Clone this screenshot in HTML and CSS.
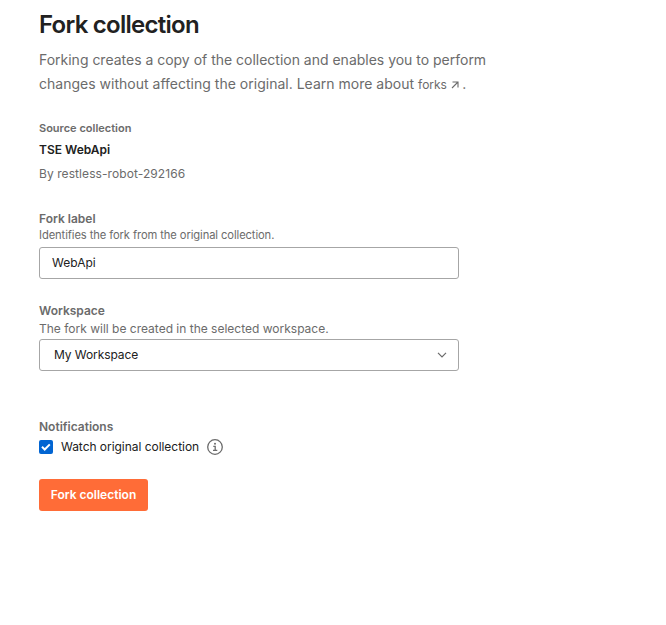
FILE: index.html
```html
<!DOCTYPE html>
<html lang="en">
<head>
<meta charset="utf-8">
<title>Fork collection</title>
<link rel="stylesheet" href="styles.css">
</head>
<body>
<main class="page">
  <h1 class="title">Fork collection</h1>
  <p class="intro">Forking creates a copy of the collection and enables you to perform<br><span class="second-line">changes without affecting the original. Learn more about</span> <a class="link">forks <svg class="arrow" viewBox="0 0 8 8" width="8" height="8"><path d="M1 7 7 1M1.500 1H7V6.500" fill="none" stroke="currentColor" stroke-width="1.100"/></svg></a> .</p>
  <section class="source">
    <div class="source-label">Source collection</div>
    <div class="source-name">TSE WebApi</div>
    <div class="source-by">By restless-robot-292166</div>
  </section>
  <section class="field label-field">
    <label class="label">Fork label</label>
    <div class="hint small">Identifies the fork from the original collection.</div>
    <div class="control">WebApi</div>
  </section>
  <section class="field">
    <label class="label">Workspace</label>
    <div class="hint">The fork will be created in the selected workspace.</div>
    <div class="control select"><span class="value">My Workspace</span><svg width="10" height="6" viewBox="0 0 10 6"><path d="M1 .8 5 4.800 9 .8" fill="none" stroke="#6b6b6b" stroke-width="1.200"/></svg></div>
  </section>
  <section class="notifications">
    <div class="label">Notifications</div>
    <div class="watch">
      <span class="checkbox"><svg width="14" height="14" viewBox="0 0 14 14"><path d="M3 6.800 5.700 9.500 10.800 4.400" fill="none" stroke="#fff" stroke-width="2"/></svg></span>
      <span class="watch-text">Watch original collection</span>
      <svg class="info" width="16" height="16" viewBox="0 0 16 16"><circle cx="8" cy="8" r="7.300" fill="none" stroke="#6b6b6b" stroke-width="1.300"/><path d="M6.300 7.300H8.200V11.400M6 11.400H10.300" fill="none" stroke="#6b6b6b" stroke-width="1.300"/><circle cx="8" cy="4.800" r="1" fill="#6b6b6b"/></svg>
    </div>
  </section>
  <button class="button">Fork collection</button>
</main>
</body>
</html>
```
FILE: styles.css
```css
* { box-sizing: border-box; }
body { margin: 0; background: #fff; color: #212121; font: 13px/20px Inter, sans-serif; }
.page { width: 459px; padding: 9px 0 0 39px; white-space: nowrap; }
.title { margin: 0; font-size: 24px; line-height: 32px; font-weight: 600; letter-spacing: -0.74px; }
.intro { margin: 7px 0 0; font-size: 14px; line-height: 24px; color: #6b6b6b; letter-spacing: -0.01px; }
.second-line { letter-spacing: 0.01px; }
.link { font-size: 12px; }
.arrow { margin: 0 -1px 0 1px; vertical-align: 0; }
.source { margin-top: 21px; color: #6b6b6b; }
.source-label { font-size: 11px; font-weight: 600; line-height: 20px; }
.source-name { font-size: 12px; font-weight: 600; line-height: 20px; margin-top: 2px; color: #212121; }
.source-by { font-size: 12px; line-height: 20px; margin-top: 4px; letter-spacing: 0.08px; }
.field { margin-top: 22px; }
.label-field { margin-top: 25px; }
.label { display: block; font-size: 12px; font-weight: 600; line-height: 20px; color: #6b6b6b; }
.hint { font-size: 12px; line-height: 16px; color: #6b6b6b; margin-bottom: 2px; }
.small { font-size: 11.2px; line-height: 12px; margin-bottom: 6px; letter-spacing: -0.1px; }
.control { width: 420px; height: 32px; border: 1px solid #a6a6a6; border-radius: 3px; padding: 0 12px; font-size: 12px; line-height: 30px; }
.select { display: flex; align-items: center; justify-content: space-between; padding: 0 11px 0 14px; }
.value { letter-spacing: -0.08px; }
.notifications { margin-top: 46px; }
.watch { display: flex; align-items: center; height: 20px; }
.checkbox { width: 14px; height: 14px; border-radius: 2px; background: #0265d2; }
.checkbox svg { display: block; }
.watch-text { margin-left: 8px; font-size: 12px; letter-spacing: -0.04px; }
.info { margin-left: 8px; }
.button { display: block; width: 109px; height: 32px; margin-top: 22px; padding: 0; border: 0; border-radius: 3px; background: #ff6c37; color: #fff; font: 600 12px/32px Inter, sans-serif; }
```
